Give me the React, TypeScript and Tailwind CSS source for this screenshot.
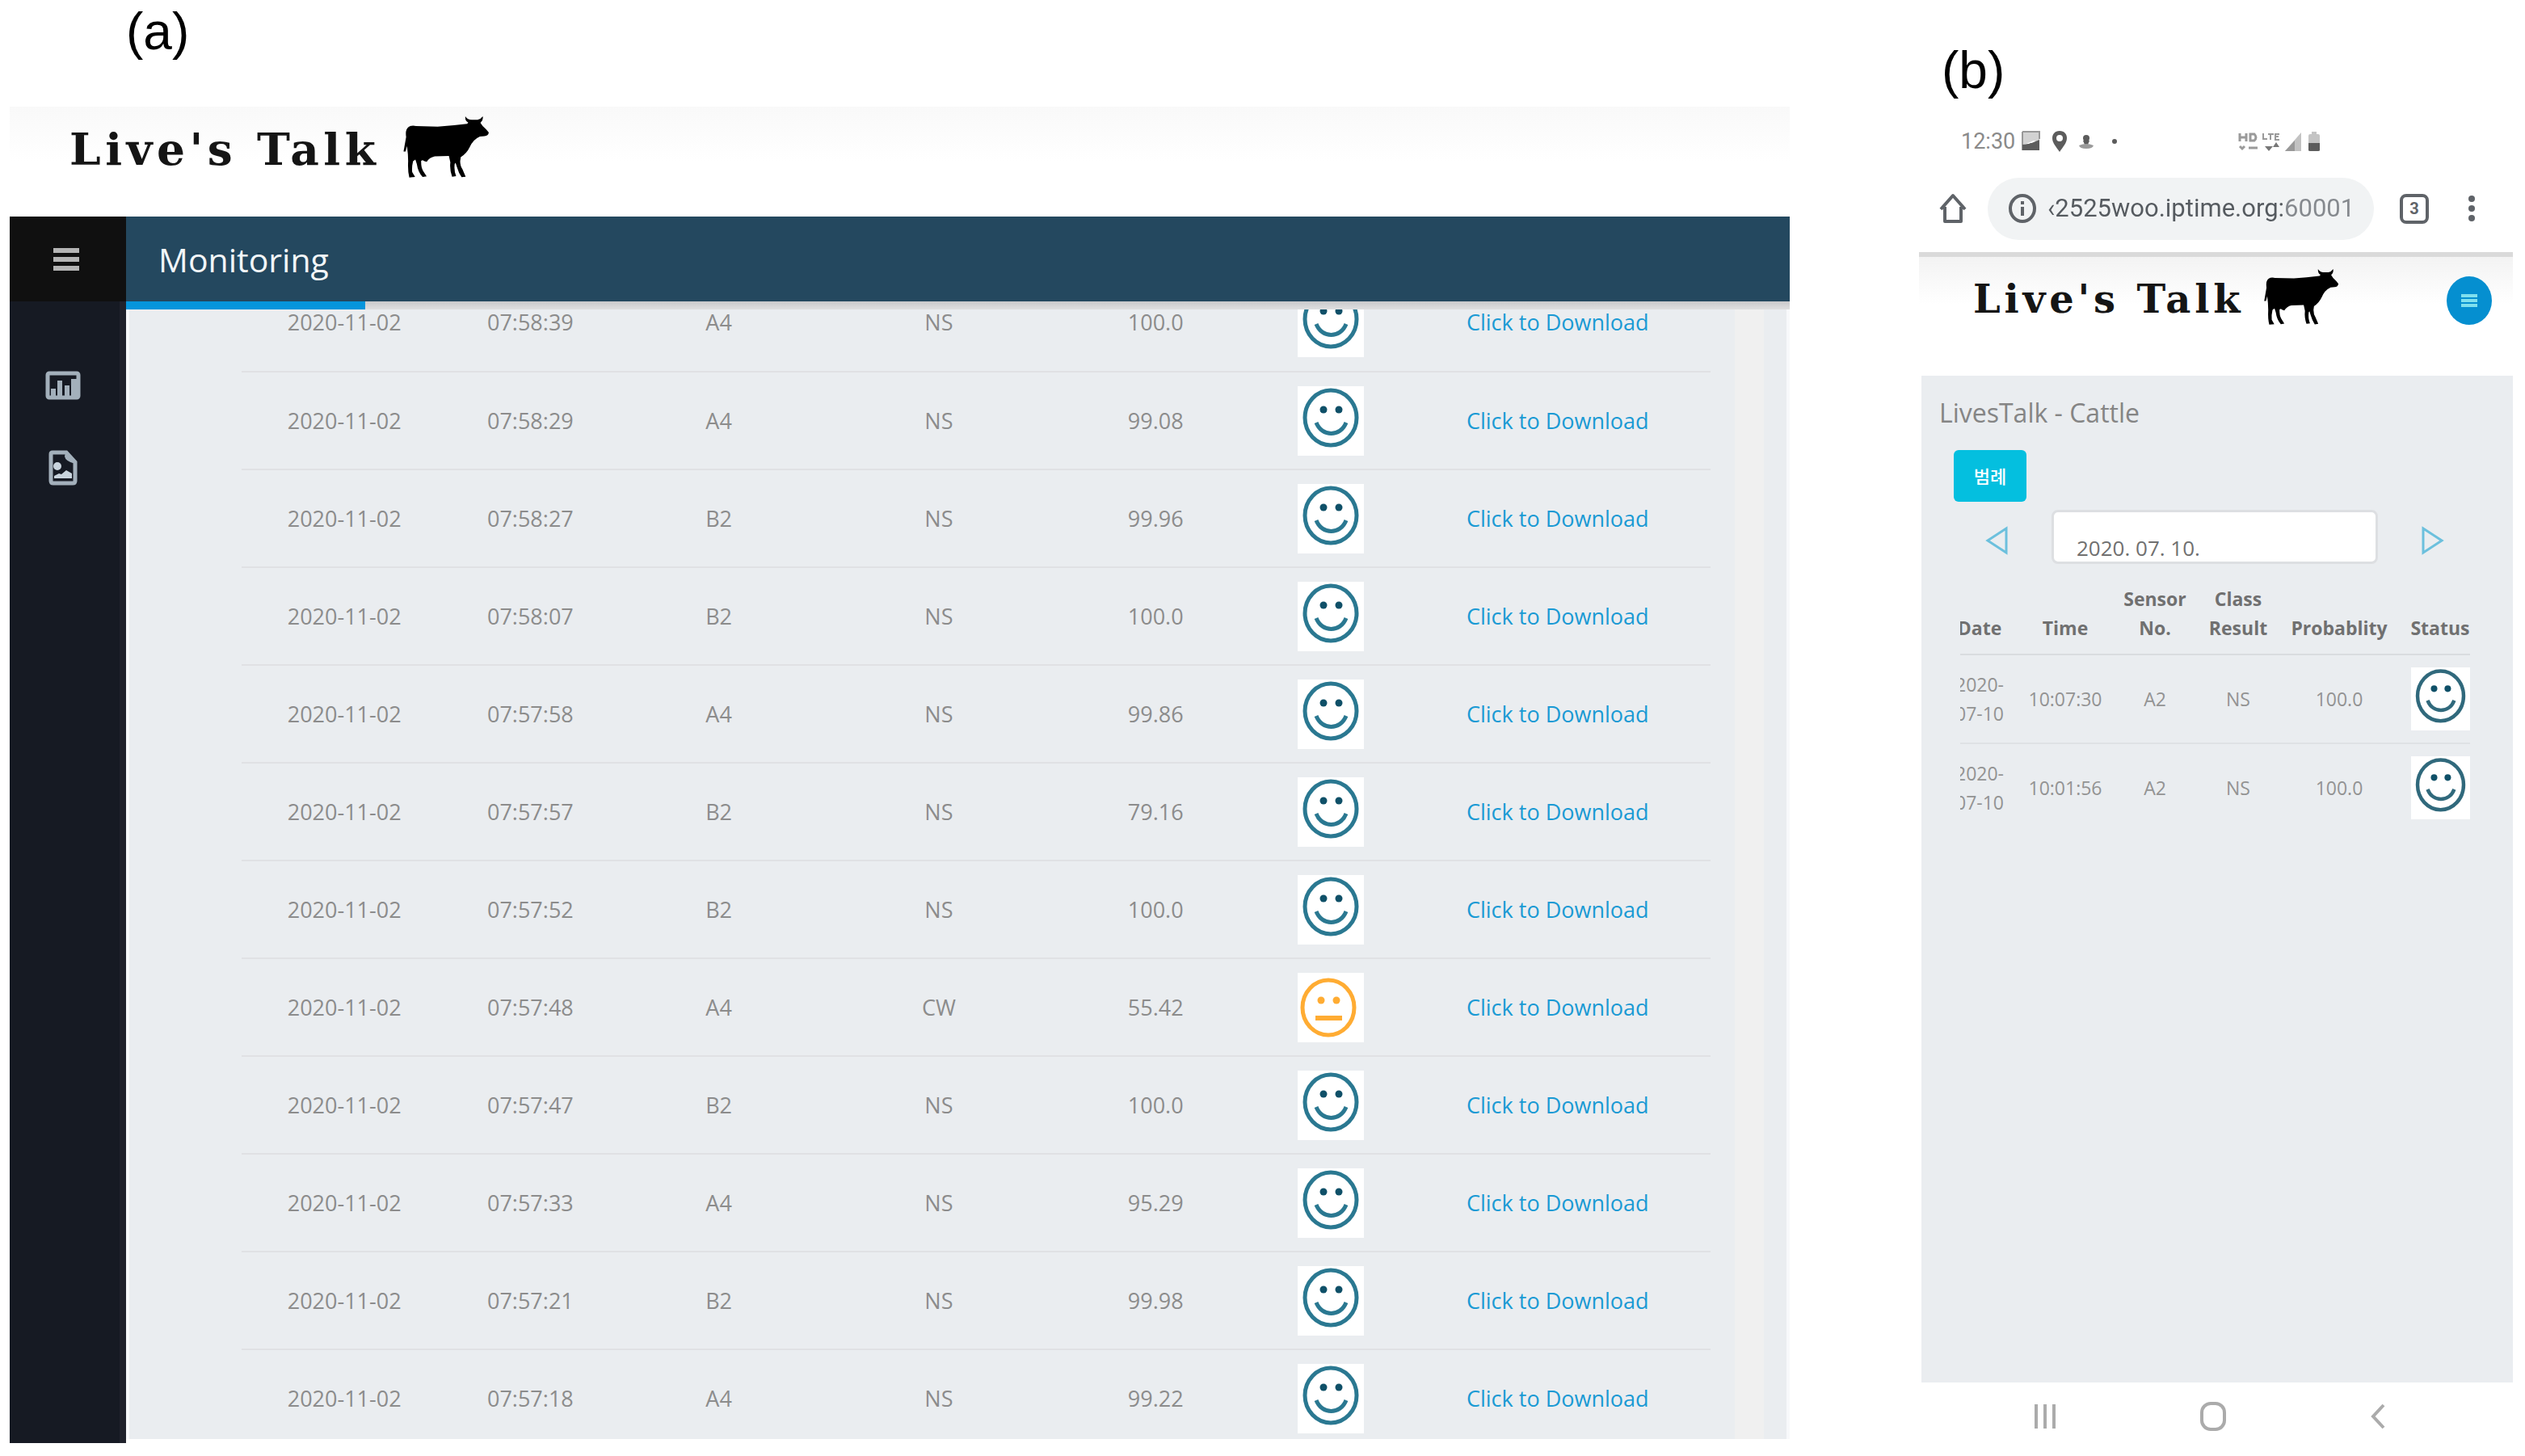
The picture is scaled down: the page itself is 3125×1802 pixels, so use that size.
import React, { useState } from 'react';

type Row = {
  time: string;
  sensor: string;
  result: string;
  probability: string;
};

const monitoringRows: Row[] = [
  { time: '07:58:39', sensor: 'A4', result: 'NS', probability: '100.0' },
  { time: '07:58:29', sensor: 'A4', result: 'NS', probability: '99.08' },
  { time: '07:58:27', sensor: 'B2', result: 'NS', probability: '99.96' },
  { time: '07:58:07', sensor: 'B2', result: 'NS', probability: '100.0' },
  { time: '07:57:58', sensor: 'A4', result: 'NS', probability: '99.86' },
  { time: '07:57:57', sensor: 'B2', result: 'NS', probability: '79.16' },
  { time: '07:57:52', sensor: 'B2', result: 'NS', probability: '100.0' },
  { time: '07:57:48', sensor: 'A4', result: 'CW', probability: '55.42' },
  { time: '07:57:47', sensor: 'B2', result: 'NS', probability: '100.0' },
  { time: '07:57:33', sensor: 'A4', result: 'NS', probability: '95.29' },
  { time: '07:57:21', sensor: 'B2', result: 'NS', probability: '99.98' },
  { time: '07:57:18', sensor: 'A4', result: 'NS', probability: '99.22' },
];

const phoneRows: Row[] = [
  { time: '10:07:30', sensor: 'A2', result: 'NS', probability: '100.0' },
  { time: '10:01:56', sensor: 'A2', result: 'NS', probability: '100.0' },
];

function Cow({ className }: { className: string }) {
  return (
    <svg viewBox="1168 74 302 230" preserveAspectRatio="none" className={className} aria-hidden="true">
      <path d="M1172 204 L1181 150 Q1177 122 1190 113 Q1200 106 1215 110 L1290 112 Q1340 109 1392 102 L1396 97 Q1384 91 1386 74 Q1394 88 1410 87 L1428 87 Q1440 84 1446 74 Q1449 88 1438 98 L1446 110 Q1458 121 1467 134 Q1465 147 1452 147 L1436 149 Q1412 160 1400 190 Q1390 212 1370 225 L1368 240 Q1368 258 1376 270 L1387 297 L1373 299 Q1363 284 1357 262 L1352 246 L1349 250 Q1346 274 1354 295 L1340 297 Q1331 270 1334 244 L1329 220 L1280 222 Q1262 226 1252 242 Q1244 241 1238 236 L1233 238 Q1232 262 1240 276 L1252 296 L1238 298 Q1222 280 1218 250 L1213 234 L1205 240 Q1200 262 1202 280 L1212 298 L1192 300 Q1186 276 1188 240 Q1188 215 1184 184 L1179 204 Z" />
    </svg>
  );
}

function Logo({ small }: { small?: boolean }) {
  return (
    <div className={small ? 'flex items-center gap-6' : 'flex items-center gap-7'}>
      <span
        className={
          small
            ? "font-['DejaVu_Serif',serif] text-[48px] leading-none font-bold tracking-widest text-[#151515]"
            : "font-['DejaVu_Serif',serif] text-[55px] leading-none font-bold tracking-widest text-[#151515]"
        }
      >
        Live's Talk
      </span>
      <Cow className={small ? 'mb-1 h-[70px] w-[94px]' : 'mb-1 h-[77px] w-[108px]'} />
    </div>
  );
}

function SmileFace({ className }: { className: string }) {
  return (
    <svg viewBox="0 0 82 86" preserveAspectRatio="none" className={className} role="img" aria-label="Normal">
      <ellipse cx="41" cy="39" rx="32" ry="34" fill="none" stroke="currentColor" strokeWidth="5" />
      <circle cx="32" cy="29" r="4.5" fill="#0f5068" />
      <circle cx="51" cy="29" r="4.5" fill="#0f5068" />
      <path d="M23 45 C30 63 53 63 60 45" fill="none" stroke="currentColor" strokeWidth="5" />
    </svg>
  );
}

function NeutralFace({ className }: { className: string }) {
  return (
    <svg viewBox="0 0 82 86" preserveAspectRatio="none" className={className} role="img" aria-label="Warning">
      <ellipse cx="38" cy="43" rx="32" ry="34" fill="none" stroke="currentColor" strokeWidth="5" />
      <circle cx="29" cy="34" r="4.5" fill="currentColor" />
      <circle cx="48" cy="34" r="4.5" fill="currentColor" />
      <path d="M22 56 H55" fill="none" stroke="currentColor" strokeWidth="6" />
    </svg>
  );
}

function MonitoringTable() {
  return (
    <table className="-mt-11 w-full table-fixed border-collapse text-center text-[27px] leading-7 text-[#8c8c8c]">
      <colgroup>
        <col className="w-[254px]" />
        <col className="w-[206px]" />
        <col className="w-[260px]" />
        <col className="w-[284px]" />
        <col className="w-[252px]" />
        <col className="w-[182px]" />
        <col className="w-[378px]" />
      </colgroup>
      <tbody>
        {monitoringRows.map(row => (
          <tr key={row.time} className="h-[121px] border-b-2 border-[#e0e1e4]">
            <td>2020-11-02</td>
            <td>{row.time}</td>
            <td>{row.sensor}</td>
            <td>{row.result}</td>
            <td>{row.probability}</td>
            <td>
              {row.result === 'CW' ? (
                <NeutralFace className="mx-auto h-[86px] w-[82px] bg-white text-[#ffac33]" />
              ) : (
                <SmileFace className="mx-auto h-[86px] w-[82px] bg-white text-[#2a7891]" />
              )}
            </td>
            <td>
              <a href="#download" className="text-[#1a9ad4]">Click to Download</a>
            </td>
          </tr>
        ))}
      </tbody>
    </table>
  );
}

function DesktopView() {
  return (
    <section className="min-w-0 flex-1">
      <h2 className="h-[132px] pt-[7px] pl-36 font-['Liberation_Sans',sans-serif] text-[64px] leading-none text-black">(a)</h2>
      <header className="flex h-[136px] items-center bg-linear-to-b from-[#f9f9f9] to-white to-50% pb-8 pl-[74px]">
        <Logo />
      </header>
      <div className="flex">
        <aside className="w-36 border-r-8 border-[#20222c] bg-[#161a23]">
          <button aria-label="Toggle menu" className="-mr-2 flex h-[105px] w-36 items-center justify-center bg-[#101010] pr-1 text-[#b4b4b4]">
            <svg viewBox="0 0 32 30" className="h-[30px] w-8" stroke="currentColor" strokeWidth="6">
              <path d="M0 4H32M0 15H32M0 26H32" />
            </svg>
          </button>
          <nav className="flex flex-col items-center gap-[62px] pt-[86px] pr-1 text-[#a3b0bb]">
            <a href="#chart" aria-label="Chart">
              <svg viewBox="0 0 44 36" className="h-9 w-11">
                <rect x="3" y="3" width="38" height="30" rx="2" fill="none" stroke="currentColor" strokeWidth="5" />
                <path d="M7 31V22h6v9zM15 31V12h6v19zM24 31V18h6v13zM32 31V10h7v21z" fill="currentColor" />
              </svg>
            </a>
            <a href="#image" aria-label="Images">
              <svg viewBox="0 0 36 44" className="h-11 w-9">
                <path d="M5 3H22L33 15V38Q33 41 30 41H6Q3 41 3 38V5Q3 3 5 3Z" fill="none" stroke="currentColor" strokeWidth="5" />
                <path d="M21 3L20 8Q21 14 33 17L33 14Z" fill="currentColor" />
                <circle cx="11" cy="20" r="5" fill="#c9d4dd" />
                <path d="M7 35V32L13 29L16 30L22 25L29 29V35Z" fill="#c9d4dd" />
              </svg>
            </a>
          </nav>
        </aside>
        <div className="min-w-0 flex-1">
          <div className="flex h-[105px] items-center bg-[#24485f] pl-10">
            <h1 className="text-[41px] leading-[52px] font-medium text-[#f2f6f8]">Monitoring</h1>
          </div>
          <div className="h-[10px] bg-linear-to-b from-[#c9c9cb] to-[#dfdfe0]">
            <div className="h-full w-[296px] bg-[#0595dc]" />
          </div>
          <div className="mb-[5px] flex h-[calc(100vh-404px)] overflow-hidden border-x-4 border-[#f8f9fb] bg-[#eaedf0]">
            <div className="min-w-0 flex-1 pr-[30px] pl-[139px]">
              <MonitoringTable />
            </div>
            <div className="mr-7 w-9 bg-[#f0f0f0]" />
          </div>
        </div>
      </div>
    </section>
  );
}

function StatusBar() {
  return (
    <div className="flex h-[58px] items-center pl-[52px] font-['Roboto',sans-serif] text-[27px] leading-8 text-[#8a8a8a]">
      <span>12:30</span>
      <svg viewBox="0 0 400 30" className="ml-1.5 h-[30px] w-[400px]" fill="#5c5c5c">
        <path d="M3 3H24V17L17 14L10 17L3 20Z" fill="#d2d2d2" />
        <path d="M3 3H24V12" fill="none" stroke="#999" strokeWidth="2" />
        <path d="M3 3V20L11 18L24 12V26H3Z" fillRule="evenodd" clipPath="inset(14px 0 0 0)" />
        <path d="M3 3V26" stroke="#999" strokeWidth="2" />
        <path d="M3 19L12 18L24 13V26H3Z" />
        <path d="M49 2C43 2 40 6 40 11C40 17 45 22 49 28C53 22 58 17 58 11C58 6 55 2 49 2ZM49 7A4 4 0 1 1 49 15A4 4 0 1 1 49 7Z" fillRule="evenodd" />
        <circle cx="82" cy="11" r="4" />
        <path d="M78 14H86L84 19H80Z" />
        <path d="M73 20Q82 16 91 20Q90 24 82 24Q74 24 73 20Z" fill="#9a9a9a" />
        <circle cx="117" cy="15" r="3" />
        <g fill="none" stroke="#9a9a9a" strokeWidth="3">
          <path d="M272 5V15M272 10H280M280 5V15M285 6H290Q294 10 290 14H285ZM272 21L275 24L278 21M283 23H294" />
          <path d="M301 5V12H306M307 6H314M310 6V13M321 6H316V13H321M316 9H320" strokeWidth="2" />
        </g>
        <path d="M303 21H313L308 27ZM313 22L317 16L321 22Z" fill="#777" />
        <path d="M328 27L348 4V27Z" fill="#c2c2c2" />
        <path d="M328 27L340 14V27Z" fill="#999" />
        <path d="M357 8Q357 6 359 6H361V3H367V6H369Q371 6 371 8V18H357Z" fill="#c4c4c4" />
        <path d="M357 17H371V26Q371 27 369 27H359Q357 27 357 26Z" />
      </svg>
    </div>
  );
}

function BrowserBar() {
  const [url, setUrl] = useState('‹2525woo.iptime.org:60001');

  return (
    <div className="flex h-[108px] items-center pr-[46px] pl-[25px] text-[#5f6368]">
      <button aria-label="Home">
        <svg viewBox="0 0 34 38" className="h-[38px] w-[34px]" fill="none" stroke="currentColor" strokeWidth="4">
          <path d="M7 17V35H27V17M2 20L17 3L32 20" strokeLinejoin="round" />
        </svg>
      </button>
      <div className="ml-[26px] flex h-[77px] min-w-0 flex-1 items-center rounded-full bg-[#f1f3f4] pr-4 pl-[26px]">
        <svg viewBox="0 0 34 36" className="h-9 w-[34px] shrink-0" fill="none" stroke="currentColor" strokeWidth="4">
          <ellipse cx="17" cy="18" rx="15" ry="16" />
          <path d="M17 16V27M17 9V13" />
        </svg>
        <input
          aria-label="Address"
          value={url}
          onChange={e => setUrl(e.target.value)}
          className="ml-[14px] w-full min-w-0 bg-linear-to-r from-[#555a5f] from-75% to-[#85898e] to-75% bg-clip-text font-['Roboto',sans-serif] text-[31px] leading-10 text-transparent outline-none"
        />
      </div>
      <button
        aria-label="Tabs"
        className="ml-8 h-[37px] w-9 rounded-lg border-4 border-[#5f6368] font-['Roboto',sans-serif] text-[20px] leading-7 font-bold"
      >
        3
      </button>
      <button aria-label="More" className="ml-12">
        <svg viewBox="0 0 10 34" className="h-[34px] w-[10px]" fill="currentColor">
          <circle cx="5" cy="5" r="4" />
          <circle cx="5" cy="17" r="4" />
          <circle cx="5" cy="29" r="4" />
        </svg>
      </button>
    </div>
  );
}

function PhoneTable() {
  return (
    <div className="mr-[53px] ml-12 overflow-hidden">
      <table className="-ml-[26px] w-[668px] table-fixed border-collapse text-center text-[23px] leading-9 text-[#939393]">
        <colgroup>
          <col className="w-[100px]" />
          <col className="w-[112px]" />
          <col className="w-[110px]" />
          <col className="w-[96px]" />
          <col className="w-[154px]" />
          <col className="w-[96px]" />
        </colgroup>
        <thead>
          <tr className="h-[90px] border-b-2 border-[#d9dcdf] align-bottom text-[#707070]">
            <th className="pb-[14px] font-bold">Date</th>
            <th className="pb-[14px] font-bold">Time</th>
            <th className="pb-[14px] font-bold">Sensor No.</th>
            <th className="pb-[14px] font-bold">Class Result</th>
            <th className="pb-[14px] font-bold">Probablity</th>
            <th className="pb-[14px] font-bold">Status</th>
          </tr>
        </thead>
        <tbody>
          {phoneRows.map(row => (
            <tr key={row.time} className="h-[110px] border-b-2 border-[#dfe2e5] last:border-transparent">
              <td>2020-<br />07-10</td>
              <td>{row.time}</td>
              <td>{row.sensor}</td>
              <td>{row.result}</td>
              <td>{row.probability}</td>
              <td>
                <SmileFace className="mx-auto h-[78px] w-[73px] bg-white text-[#30697c]" />
              </td>
            </tr>
          ))}
        </tbody>
      </table>
    </div>
  );
}

function PhoneView() {
  const [date, setDate] = useState('2020. 07. 10.');

  return (
    <section className="w-[735px] shrink-0">
      <h2 className="h-[146px] pt-[55px] pl-7 font-['Liberation_Sans',sans-serif] text-[64px] leading-none text-black">(b)</h2>
      <StatusBar />
      <BrowserBar />
      <header className="flex h-[153px] items-center justify-between border-t-[6px] border-[#dadada] bg-linear-to-b from-[#f3f3f3] to-white to-40% pr-[26px] pb-11 pl-[67px]">
        <Logo small />
        <button aria-label="Menu" className="mt-1 flex h-[60px] w-[56px] items-center justify-center rounded-[50%] bg-[#058fd0] text-[#7fe0ee]">
          <svg viewBox="0 0 20 18" className="h-[18px] w-5" stroke="currentColor" strokeWidth="4">
            <path d="M0 3H20M0 9H20M0 15H20" />
          </svg>
        </button>
      </header>
      <div className="ml-[3px] h-[calc(100vh-556px)] bg-[#eaedf0]">
        <h3 className="pt-[22px] pl-[22px] text-[32px] leading-[48px] text-[#858585]">LivesTalk - Cattle</h3>
        <button className="mt-[22px] ml-10 block h-16 w-[90px] rounded-md bg-[#04bfdf] font-['Open_Sans','Noto_Sans_CJK_KR',sans-serif] text-[22px] leading-8 font-medium text-white">
          범례
        </button>
        <div className="mt-[10px] flex items-center justify-between pr-[84px] pl-[78px] text-[#6cc0dd]">
          <button aria-label="Previous day" className="pt-2">
            <svg viewBox="0 0 30 36" className="h-9 w-[30px]" fill="none" stroke="currentColor" strokeWidth="3">
              <path d="M27 3V33L4 18Z" />
            </svg>
          </button>
          <input
            aria-label="Date"
            value={date}
            onChange={e => setDate(e.target.value)}
            className="h-[67px] w-[404px] rounded-lg border-[3px] border-[#dddfe2] bg-white pt-[26px] pl-7 text-[26px] leading-8 text-[#707070] outline-none"
          />
          <button aria-label="Next day" className="pt-2">
            <svg viewBox="0 0 30 36" className="h-9 w-[30px]" fill="none" stroke="currentColor" strokeWidth="3">
              <path d="M3 3V33L26 18Z" />
            </svg>
          </button>
        </div>
        <div className="pt-[22px]">
          <PhoneTable />
        </div>
      </div>
      <nav className="flex h-[84px] items-center justify-between pr-[157px] pl-[142px] text-[#ababab]">
        <button aria-label="Recent apps">
          <svg viewBox="0 0 28 30" className="h-[30px] w-7" stroke="currentColor" strokeWidth="4">
            <path d="M3 0V30M14 0V30M25 0V30" />
          </svg>
        </button>
        <button aria-label="Home screen">
          <svg viewBox="0 0 32 36" className="h-9 w-8" fill="none" stroke="currentColor" strokeWidth="4">
            <rect x="2" y="2" width="28" height="32" rx="11" />
          </svg>
        </button>
        <button aria-label="Back">
          <svg viewBox="0 0 20 32" className="h-8 w-5" fill="none" stroke="currentColor" strokeWidth="4">
            <path d="M17 2L4 16L17 30" />
          </svg>
        </button>
      </nav>
    </section>
  );
}

export default function App() {
  return (
    <main className="flex min-h-screen gap-40 bg-white pr-[15px] pl-3 font-['Open_Sans','Noto_Sans_CJK_KR',sans-serif]">
      <DesktopView />
      <PhoneView />
    </main>
  );
}
